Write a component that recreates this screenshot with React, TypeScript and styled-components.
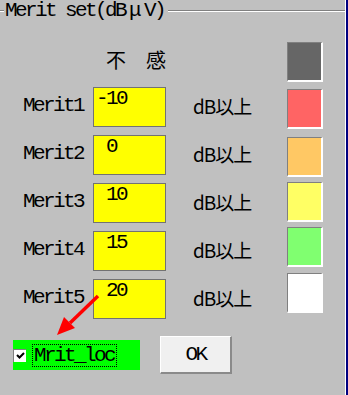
import styled, { createGlobalStyle } from "styled-components";

const GlobalStyle = createGlobalStyle`
  html, body {
    margin: 0;
    padding: 0;
    background: #c0c0c0;
  }
`;

const MONO = `"Liberation Mono", "DejaVu Sans Mono", monospace`;
const JP = `"Noto Sans CJK JP", "Noto Sans", sans-serif`;

const merits = [
  { name: "Merit1", value: "-10" },
  { name: "Merit2", value: " 0" },
  { name: "Merit3", value: " 10" },
  { name: "Merit4", value: " 15" },
  { name: "Merit5", value: " 20" },
];

const swatches = [
  { color: "#666666", gap: 0 },
  { color: "#ff6464", gap: 7 },
  { color: "#ffc864", gap: 8 },
  { color: "#ffff64", gap: 5 },
  { color: "#80ff70", gap: 5 },
  { color: "#ffffff", gap: 6 },
];

const App: React.FC = () => {
  return (
    <Window>
      <GlobalStyle />
      <Panel>
        <TitleRow>
          <Etch $width="4px" />
          <Title>
            Merit set(dB<Wide>μ</Wide>V)
          </Title>
          <Etch />
        </TitleRow>
        <Body>
          <Form>
            <span />
            <Header>不　感</Header>
            <span />
            {merits.map((m) => (
              <Row key={m.name}>
                <Label>{m.name}</Label>
                <Field>{m.value}</Field>
                <Unit>dB以上</Unit>
              </Row>
            ))}
          </Form>
          <Swatches>
            {swatches.map((s) => (
              <Swatch key={s.color} $color={s.color} $gap={s.gap} />
            ))}
          </Swatches>
        </Body>
        <Footer>
          <CheckArea>
            <CheckBox>
              <svg width="9" height="9" viewBox="0 0 9 9">
                <path d="M1 4 L3.5 6.5 L8 2" stroke="#000" strokeWidth="2" fill="none" />
              </svg>
            </CheckBox>
            <CheckLabel>Mrit_loc</CheckLabel>
          </CheckArea>
          <OkButton>OK</OkButton>
        </Footer>
        <Arrow width="50" height="50" viewBox="0 0 50 50">
          <line x1="46" y1="4" x2="18" y2="31" stroke="#ff0000" strokeWidth="3.5" />
          <polygon points="5,43 12,25 23,36" fill="#ff0000" />
        </Arrow>
      </Panel>
      <Edge />
    </Window>
  );
};

export default App;

const Window = styled.div`
  width: 348px;
  height: 395px;
  display: flex;
  background: #c0c0c0;
  overflow: hidden;
`;

const Panel = styled.div`
  position: relative;
  flex: 1;
  display: flex;
  flex-direction: column;
  border-right: 1px solid #ffffff;
`;

const Edge = styled.div`
  width: 2px;
  background: #000080;
`;

const TitleRow = styled.div`
  display: flex;
  align-items: center;
  height: 22px;
`;

const Etch = styled.div<{ $width?: string }>`
  ${(p) => (p.$width ? `width: ${p.$width};` : "flex: 1;")}
  border-top: 1px solid #808080;
  border-bottom: 1px solid #ffffff;
`;

const Title = styled.div`
  font-family: ${MONO};
  font-size: 21px;
  letter-spacing: -2.6px;
  line-height: 22px;
  padding: 0 4px 0 1px;
  color: #000;
  white-space: pre;
`;

const Wide = styled.span`
  padding: 0 5px 0 4px;
`;

const Body = styled.div`
  display: flex;
  justify-content: space-between;
`;

const Form = styled.div`
  display: grid;
  grid-template-columns: 93px 73px 1fr;
  grid-template-rows: 29px repeat(5, 40px);
  row-gap: 8px;
  padding-top: 28px;
`;

const Header = styled.div`
  font-family: ${JP};
  font-size: 20px;
  line-height: 20px;
  text-align: right;
  color: #000;
`;

const Row = styled.div`
  display: contents;
`;

const Label = styled.div`
  font-family: ${MONO};
  font-size: 21px;
  letter-spacing: -2.6px;
  padding-left: 23px;
  align-self: center;
  margin-top: -3px;
  color: #000;
`;

const Field = styled.div`
  box-sizing: border-box;
  height: 40px;
  background: #ffff00;
  border: 1px solid #727272;
  padding: 0 2px;
  font-family: ${MONO};
  font-size: 21px;
  letter-spacing: -2.6px;
  line-height: 22px;
  white-space: pre;
  color: #000;
`;

const Unit = styled.div`
  font-family: ${JP};
  font-size: 19px;
  letter-spacing: -1px;
  padding-left: 27px;
  align-self: center;
  margin-top: -3px;
  color: #000;
`;

const Swatches = styled.div`
  display: flex;
  flex-direction: column;
  margin-top: 20px;
  margin-right: 22px;
`;

const Swatch = styled.div<{ $color: string; $gap: number }>`
  box-sizing: border-box;
  width: 36px;
  height: 40px;
  margin-top: ${(p) => p.$gap}px;
  background: ${(p) => p.$color};
  border-top: 1px solid #808080;
  border-left: 1px solid #808080;
  border-right: 2px solid #ffffff;
  border-bottom: 2px solid #ffffff;
`;

const Footer = styled.div`
  display: flex;
  align-items: center;
  gap: 20px;
  margin-top: 17px;
  padding-left: 13px;
`;

const CheckArea = styled.div`
  display: flex;
  align-items: center;
  gap: 6px;
  width: 127px;
  height: 30px;
  background: #00ff00;
`;

const CheckBox = styled.div`
  box-sizing: border-box;
  width: 13px;
  height: 13px;
  background: #ffffff;
  border-top: 1px solid #808080;
  border-left: 1px solid #808080;
  display: flex;
  align-items: center;
  justify-content: center;
`;

const CheckLabel = styled.div`
  font-family: ${MONO};
  font-size: 21px;
  letter-spacing: -2.6px;
  line-height: 21px;
  padding: 0 2px 0 1px;
  border: 1px dotted #000;
  color: #000;
`;

const OkButton = styled.div`
  box-sizing: border-box;
  width: 72px;
  height: 38px;
  display: flex;
  align-items: center;
  justify-content: center;
  background: #f0f0f0;
  border-top: 1px solid #ffffff;
  border-left: 1px solid #ffffff;
  border-right: 2px solid #8a8a8a;
  border-bottom: 2px solid #8a8a8a;
  font-family: ${MONO};
  font-size: 21px;
  letter-spacing: -2.6px;
  color: #000;
`;

const Arrow = styled.svg`
  position: absolute;
  left: 52px;
  top: 292px;
`;
